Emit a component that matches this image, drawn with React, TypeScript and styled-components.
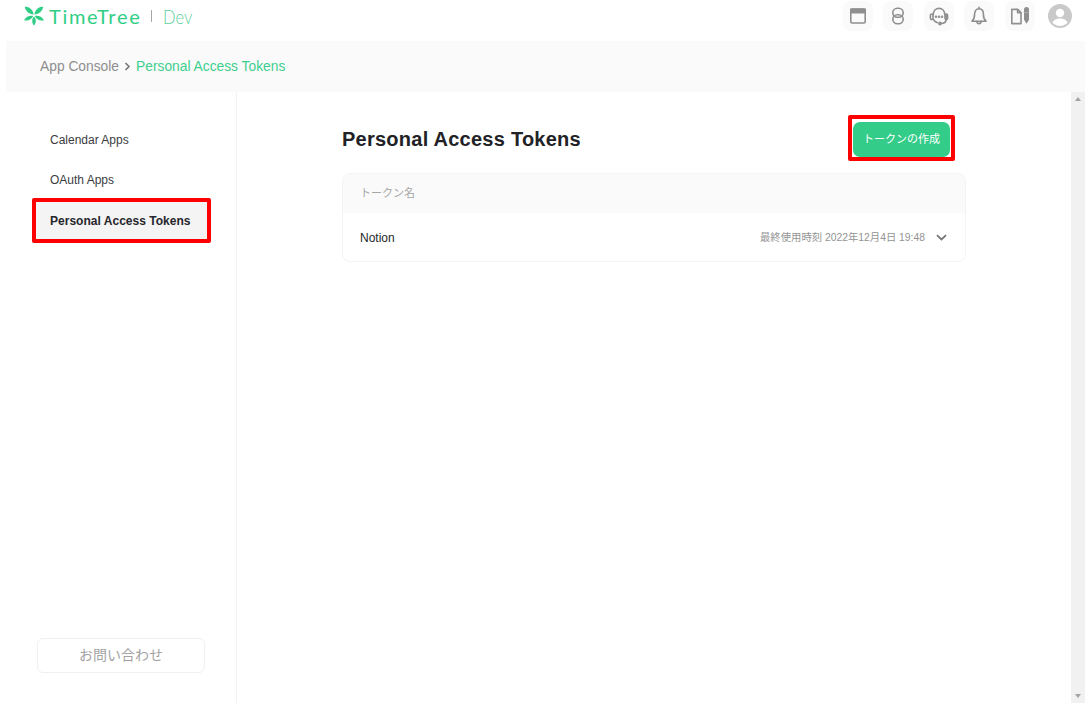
import React from "react";
import styled, { createGlobalStyle } from "styled-components";

const GlobalStyle = createGlobalStyle`
  html, body {
    margin: 0;
    padding: 0;
    background: #fff;
    overflow: hidden;
  }
  * {
    box-sizing: border-box;
  }
  body {
    font-family: "Liberation Sans", "Noto Sans CJK JP", sans-serif;
  }
`;

const SPage = styled.div`
  width: 1091px;
  height: 707px;
  padding: 0 6px 4px;
  display: flex;
  flex-direction: column;
`;

const SHeader = styled.header`
  height: 41px;
  flex: none;
  display: flex;
  align-items: flex-start;
  justify-content: space-between;
  padding: 1px 13px 0 18px;
`;

const SLogo = styled.div`
  display: flex;
  align-items: center;
  height: 30px;
`;

const SLogoText = styled.span`
  margin-left: 5px;
  font-family: "Lato", sans-serif;
  font-size: 20px;
  letter-spacing: 1.7px;
  color: #2fce85;
`;

const SLogoBar = styled.span`
  width: 1px;
  height: 12px;
  margin: 0 11px 0 10px;
  background: #a9a9a9;
`;

const SLogoDev = styled.span`
  font-family: "Lato", sans-serif;
  font-weight: 300;
  font-size: 20px;
  color: #5fcf9c;
  display: inline-block;
  transform: scaleX(0.83);
  transform-origin: left center;
`;

const SIcons = styled.div`
  display: flex;
  align-items: center;
  gap: 10.5px;
`;

const SIconTile = styled.div`
  width: 30px;
  height: 30px;
  border-radius: 8px;
  background: #fafafa;
  display: flex;
  align-items: center;
  justify-content: center;
`;

const SAvatar = styled.svg`
  margin-left: 3px;
  display: block;
`;

const SBreadcrumb = styled.nav`
  height: 51px;
  flex: none;
  display: flex;
  align-items: center;
  padding-left: 34px;
  background: #fafafa;
  font-size: 13.8px;
  color: #8e8e8e;
`;

const SCrumbSep = styled.svg`
  margin: 0 5px 0 5px;
`;

const SCrumbActive = styled.span`
  color: #3ecf8e;
`;

const SBody = styled.div`
  flex: 1;
  display: flex;
  min-height: 0;
`;

const SSidebar = styled.aside`
  width: 231px;
  flex: none;
  border-right: 1px solid #f2f2f2;
  padding: 29px 0 30px 30px;
  display: flex;
  flex-direction: column;
`;

const SMenu = styled.ul`
  list-style: none;
  margin: 0;
  padding: 0;
  display: flex;
  flex-direction: column;
  gap: 3.5px;
`;

const SMenuItem = styled.li<{ $active?: boolean }>`
  position: relative;
  width: 171px;
  height: 37px;
  padding-left: 14px;
  display: flex;
  align-items: center;
  font-size: 12px;
  color: ${(p) => (p.$active ? "#26262c" : "#3c3c42")};
  font-weight: ${(p) => (p.$active ? 700 : 400)};
  background: ${(p) => (p.$active ? "#f4f4f4" : "transparent")};
  letter-spacing: ${(p) => (p.$active ? "0.02px" : "0")};
`;

const SRedMark = styled.span<{ $inset: string }>`
  position: absolute;
  inset: ${(p) => p.$inset};
  border: 4px solid #ff0000;
  border-radius: 2px;
  pointer-events: none;
`;

const SContact = styled.button`
  margin: auto 0 0 1px;
  width: 168px;
  height: 35px;
  background: #fff;
  border: 1px solid #f0f0f0;
  border-radius: 6px;
  font-family: inherit;
  font-size: 14px;
  color: #a3a3a3;
  padding: 0 0 4px;
`;

const SMain = styled.main`
  flex: 1;
  padding: 30px 0 0 105px;
`;

const SContent = styled.div`
  width: 624px;
`;

const STitleRow = styled.div`
  height: 35px;
  display: flex;
  align-items: center;
  justify-content: space-between;
  padding-right: 16px;
  margin-bottom: 16px;
`;

const STitle = styled.h1`
  margin: 0;
  font-size: 20px;
  font-weight: 700;
  color: #222226;
  letter-spacing: 0.25px;
`;

const SCreateButton = styled.button`
  position: relative;
  width: 97px;
  height: 35px;
  border: none;
  border-radius: 7px;
  background: #33cc88;
  color: #fff;
  font-family: inherit;
  font-size: 11px;
  padding: 0 0 3px;
`;

const STable = styled.div`
  border: 1px solid #f4f4f4;
  border-radius: 8px;
  overflow: hidden;
`;

const STableHead = styled.div`
  height: 39px;
  padding: 0 0 3px 17px;
  display: flex;
  align-items: center;
  background: #fafafa;
  font-size: 11px;
  color: #a6a6a6;
`;

const STableRow = styled.div`
  height: 48px;
  padding: 0 18px 0 17px;
  display: flex;
  align-items: center;
  justify-content: space-between;
`;

const SRowName = styled.span`
  font-size: 12px;
  color: #26262c;
  padding-top: 1px;
`;

const SRowMeta = styled.div`
  display: flex;
  align-items: center;
  gap: 11px;
  font-size: 10.35px;
  color: #949494;
`;

const SMetaText = styled.span`
  padding-bottom: 2px;
`;

const SScrollbar = styled.div`
  width: 14px;
  flex: none;
  background: #f1f1f1;
  display: flex;
  flex-direction: column;
  justify-content: space-between;
  align-items: center;
  padding: 5px 0;
`;

const SArrow = styled.span<{ $down?: boolean }>`
  width: 0;
  height: 0;
  border-left: 3.5px solid transparent;
  border-right: 3.5px solid transparent;
  ${(p) =>
    p.$down
      ? "border-top: 4px solid #a3a3a3;"
      : "border-bottom: 4px solid #a3a3a3;"}
`;

const LeafLogo = () => (
  <svg width="20" height="20" viewBox="0 0 20 20" fill="#2fce85">
    <path d="M0.8 0.8C5 0.6 8.6 3.2 9.6 8.4 4.8 8.2 1.6 5.4 0.8 0.8z" />
    <path d="M19.2 0.8C15 0.6 11.4 3.2 10.4 8.4 15.2 8.2 18.4 5.4 19.2 0.8z" />
    <path d="M0 14.2C2 10.6 5.6 9.4 9.2 10 7.4 13.6 4 15.4 0 14.2z" />
    <path d="M20 14.2C18 10.6 14.4 9.4 10.8 10 12.6 13.6 16 15.4 20 14.2z" />
    <path d="M10 10.4C12.4 13 12.4 16.6 10 19.6 7.6 16.6 7.6 13 10 10.4z" />
  </svg>
);

const iconProps = {
  width: 20,
  height: 20,
  viewBox: "0 0 20 20",
  fill: "none",
  stroke: "#8f8f8f",
  strokeWidth: 1.6,
  strokeLinecap: "round" as const,
  strokeLinejoin: "round" as const,
};

const WindowIcon = () => (
  <svg {...iconProps}>
    <rect x="2.8" y="3" width="14.4" height="14" rx="1.2" />
    <path d="M2.8 3.4h14.4v3.4H2.8z" fill="#8f8f8f" />
  </svg>
);

const LinkIcon = () => (
  <svg {...iconProps}>
    <rect x="4.8" y="2.2" width="10.4" height="9" rx="4.5" />
    <rect x="4.8" y="8.8" width="10.4" height="9" rx="4.5" />
  </svg>
);

const SupportIcon = () => (
  <svg {...iconProps}>
    <path d="M4.2 8.6C4.4 5 6.8 2.4 10 2.4s5.6 2.6 5.8 6.2" />
    <rect x="1.4" y="8" width="2.6" height="5.6" rx="1.3" />
    <rect x="16" y="8" width="2.6" height="5.6" rx="1.3" fill="#8f8f8f" />
    <path d="M4.4 13.4C5.2 15.2 6.6 16.2 8.2 16.6" />
    <path d="M17.2 13.6c-.2 2.4-2 3.8-5.2 3.9" />
    <circle cx="11" cy="17.5" r="1.1" fill="#8f8f8f" />
    <circle cx="7" cy="10.8" r=".5" fill="#8f8f8f" />
    <circle cx="10" cy="10.8" r=".5" fill="#8f8f8f" />
    <circle cx="13" cy="10.8" r=".5" fill="#8f8f8f" />
  </svg>
);

const BellIcon = () => (
  <svg {...iconProps}>
    <path d="M10 1.4v1.4" />
    <path d="M10 2.8c-3 0-4.4 2.4-4.4 5.4 0 3.6-.6 5.2-2.6 7h14c-2-1.8-2.6-3.4-2.6-7 0-3-1.4-5.4-4.4-5.4z" />
    <path d="M7.8 15.4c.2 1.4 1 2.2 2.2 2.2s2-.8 2.2-2.2" />
  </svg>
);

const DocPenIcon = () => (
  <svg {...iconProps}>
    <path d="M1.8 3.4h6l3.2 3.2v11H1.8z" />
    <path d="M7.6 3.6v3.2h3.2" />
    <path d="M14 3.6a2.5 2.5 0 0 1 5 0v10.2l-2.5 4-2.5-4z" fill="#8f8f8f" stroke="none" />
    <path d="M14 6.4h5" stroke="#b4b4b4" strokeWidth="0.8" />
  </svg>
);

const App = () => (
  <>
    <GlobalStyle />
    <SPage>
      <SHeader>
        <SLogo>
          <LeafLogo />
          <SLogoText>TimeTree</SLogoText>
          <SLogoBar />
          <SLogoDev>Dev</SLogoDev>
        </SLogo>
        <SIcons>
          <SIconTile><WindowIcon /></SIconTile>
          <SIconTile><LinkIcon /></SIconTile>
          <SIconTile><SupportIcon /></SIconTile>
          <SIconTile><BellIcon /></SIconTile>
          <SIconTile><DocPenIcon /></SIconTile>
          <SAvatar width="24" height="24" viewBox="0 0 24 24">
            <circle cx="12" cy="12" r="12" fill="#c9c9c9" />
            <circle cx="12" cy="9" r="4.2" fill="#fff" />
            <path d="M4.4 18.6c1.2-3 4.2-4.2 7.6-4.2s6.4 1.2 7.6 4.2A10.4 10.4 0 0 1 12 22a10.4 10.4 0 0 1-7.6-3.4z" fill="#fff" />
          </SAvatar>
        </SIcons>
      </SHeader>
      <SBreadcrumb>
        App Console
        <SCrumbSep width="7" height="9" viewBox="0 0 7 9" fill="none" stroke="#777" strokeWidth="1.6">
          <path d="M1.5 1l3.5 3.5L1.5 8" />
        </SCrumbSep>
        <SCrumbActive>Personal Access Tokens</SCrumbActive>
      </SBreadcrumb>
      <SBody>
        <SSidebar>
          <SMenu>
            <SMenuItem>Calendar Apps</SMenuItem>
            <SMenuItem>OAuth Apps</SMenuItem>
            <SMenuItem $active>
              Personal Access Tokens
              <SRedMark $inset="-4px" />
            </SMenuItem>
          </SMenu>
          <SContact>お問い合わせ</SContact>
        </SSidebar>
        <SMain>
          <SContent>
            <STitleRow>
              <STitle>Personal Access Tokens</STitle>
              <SCreateButton>
                トークンの作成
                <SRedMark $inset="-7px -5px -4px" />
              </SCreateButton>
            </STitleRow>
            <STable>
              <STableHead>トークン名</STableHead>
              <STableRow>
                <SRowName>Notion</SRowName>
                <SRowMeta>
                  <SMetaText>最終使用時刻 2022年12月4日 19:48</SMetaText>
                  <svg width="11" height="7" viewBox="0 0 11 7" fill="none" stroke="#777" strokeWidth="1.8">
                    <path d="M1 1.2l4.5 4.3L10 1.2" />
                  </svg>
                </SRowMeta>
              </STableRow>
            </STable>
          </SContent>
        </SMain>
        <SScrollbar>
          <SArrow />
          <SArrow $down />
        </SScrollbar>
      </SBody>
    </SPage>
  </>
);

export default App;
